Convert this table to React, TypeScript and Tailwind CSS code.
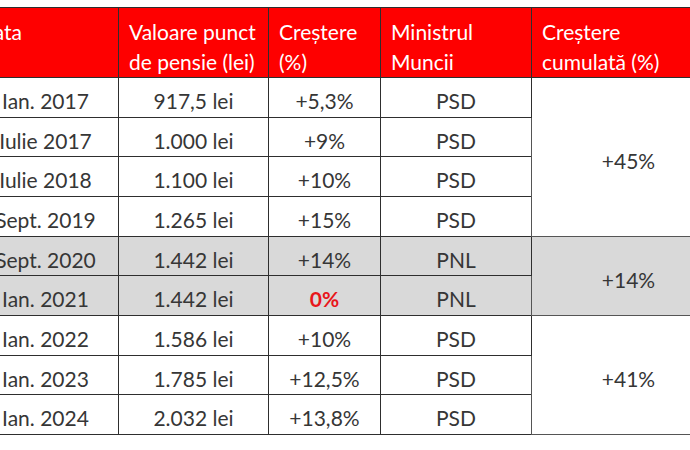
import React from "react";

type Row = {
    date: string;
    value: string;
    growth: string;
    party: string;
    gray?: boolean;
    zero?: boolean;
};

const rows: Row[] = [
    { date: "Ian. 2017", value: "917,5 lei", growth: "+5,3%", party: "PSD" },
    { date: "Iulie 2017", value: "1.000 lei", growth: "+9%", party: "PSD" },
    { date: "Iulie 2018", value: "1.100 lei", growth: "+10%", party: "PSD" },
    { date: "Sept. 2019", value: "1.265 lei", growth: "+15%", party: "PSD" },
    { date: "Sept. 2020", value: "1.442 lei", growth: "+14%", party: "PNL", gray: true },
    { date: "Ian. 2021", value: "1.442 lei", growth: "0%", party: "PNL", gray: true, zero: true },
    { date: "Ian. 2022", value: "1.586 lei", growth: "+10%", party: "PSD" },
    { date: "Ian. 2023", value: "1.785 lei", growth: "+12,5%", party: "PSD" },
    { date: "Ian. 2024", value: "2.032 lei", growth: "+13,8%", party: "PSD" },
];

// merged cells of the last column, keyed by the row they start on
const cumulated: Record<number, { span: number; text: string; gray?: boolean }> = {
    0: { span: 4, text: "+45%" },
    4: { span: 2, text: "+14%", gray: true },
    6: { span: 3, text: "+41%" },
};

const cell = "border border-[#2e2e2e] text-center align-middle pt-[7px] pb-0";
const head = "border border-[#2e2e2e] text-left align-top pt-[9px] pb-0 leading-[30px] font-normal text-white";

export default function App() {
    return (
        <div
            className="w-[690px] h-[450px] overflow-hidden bg-white pt-[7px]"
            style={{ fontFamily: "Lato, 'Open Sans', sans-serif" }}
        >
            <table className="ml-[-28px] w-[753px] table-fixed border-collapse text-[21px] text-[#363636]">
                <colgroup>
                    <col className="w-[146px]" />
                    <col className="w-[150px]" />
                    <col className="w-[112px]" />
                    <col className="w-[151px]" />
                    <col className="w-[194px]" />
                </colgroup>
                <thead>
                    <tr className="h-[70px] bg-[#fe0000]">
                        <th className={head + " pl-[5px]"}>Data</th>
                        <th className={head + " pl-[10px]"}>
                            Valoare punct
                            <br />
                            de pensie (lei)
                        </th>
                        <th className={head + " pl-[10px]"}>
                            Creștere
                            <br />
                            (%)
                        </th>
                        <th className={head + " pl-[10px]"}>
                            Ministrul
                            <br />
                            Muncii
                        </th>
                        <th className={head + " pl-[10px]"}>
                            Creștere
                            <br />
                            cumulată (%)
                        </th>
                    </tr>
                </thead>
                <tbody>
                    {rows.map((r, i) => (
                        <tr key={r.date} className={"h-[39.67px] " + (r.gray ? "bg-[#d9d9d9]" : "bg-white")}>
                            <td className={cell}>{r.date}</td>
                            <td className={cell}>{r.value}</td>
                            <td className={cell + (r.zero ? " font-bold text-[#e8161b]" : "")}>{r.growth}</td>
                            <td className={cell}>{r.party}</td>
                            {cumulated[i] && (
                                <td
                                    rowSpan={cumulated[i].span}
                                    className={
                                        "border border-[#555] text-center align-middle pt-[8px] " +
                                        (cumulated[i].gray ? "bg-[#d9d9d9]" : "bg-white")
                                    }
                                >
                                    {cumulated[i].text}
                                </td>
                            )}
                        </tr>
                    ))}
                </tbody>
            </table>
        </div>
    );
}
